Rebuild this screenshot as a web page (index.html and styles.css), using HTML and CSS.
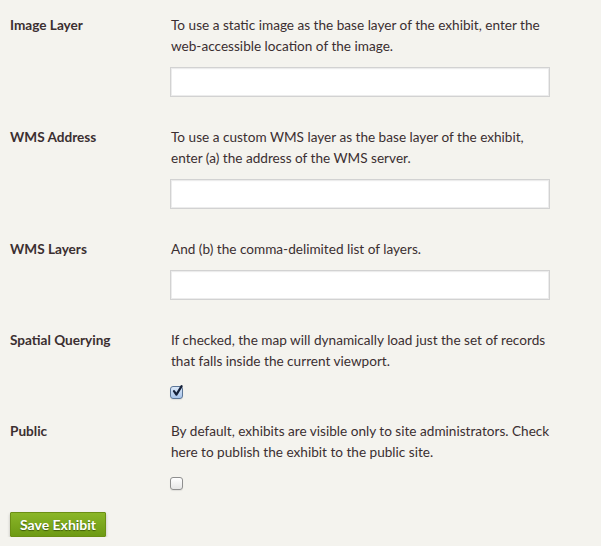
FILE: index.html
```html
<!DOCTYPE html>
<html>
<head>
<meta charset="utf-8">
<link rel="stylesheet" href="styles.css">
</head>
<body>
<form class="form">
  <div class="row">
    <div class="label">Image Layer</div>
    <div class="field">
      <p class="desc">To use a static image as the base layer of the exhibit, enter the web-accessible location of the image.</p>
      <input class="text" type="text">
    </div>
  </div>
  <div class="row">
    <div class="label">WMS Address</div>
    <div class="field">
      <p class="desc">To use a custom WMS layer as the base layer of the exhibit, enter (a) the address of the WMS server.</p>
      <input class="text" type="text">
    </div>
  </div>
  <div class="row">
    <div class="label">WMS Layers</div>
    <div class="field">
      <p class="desc">And (b) the comma-delimited list of layers.</p>
      <input class="text" type="text">
    </div>
  </div>
  <div class="row">
    <div class="label">Spatial Querying</div>
    <div class="field">
      <p class="desc">If checked, the map will dynamically load just the set of records that falls inside the current viewport.</p>
      <span class="check checked">
        <svg class="tick" width="13" height="13" viewBox="0 0 13 13"><path d="M3 6.2 L5.4 9.6 L10.6 1.2" fill="none" stroke="#15213a" stroke-width="2.2" stroke-linecap="round" stroke-linejoin="round"/></svg>
      </span>
    </div>
  </div>
  <div class="row">
    <div class="label">Public</div>
    <div class="field">
      <p class="desc">By default, exhibits are visible only to site administrators. Check here to publish the exhibit to the public site.</p>
      <span class="check"></span>
    </div>
  </div>
  <div class="actions">
    <button class="save" type="button">Save Exhibit</button>
  </div>
</form>
</body>
</html>
```

FILE: styles.css
```css
html, body {
  margin: 0;
  padding: 0;
}
body {
  background: #f4f3ee;
  color: #3b2f31;
  font-family: Lato, "Open Sans", sans-serif;
  font-size: 13.6px;
  line-height: 21px;
}
.form {
  display: flex;
  flex-direction: column;
  gap: 22px;
  padding: 15px 0 0 10px;
}
.row {
  display: grid;
  grid-template-columns: 160px 380px;
}
.label {
  font-weight: bold;
}
.desc {
  margin: 0;
  padding-left: 1px;
}
.text {
  display: block;
  box-sizing: border-box;
  width: 380px;
  height: 30px;
  margin: 10px 0 8px;
  border: 1px solid #d2d2d2;
  background: #fff;
  box-shadow: inset 0 0 0 1px #ececec, inset 0 1px 2px rgba(0,0,0,0.05);
}
.check {
  display: block;
  position: relative;
  box-sizing: border-box;
  width: 13px;
  height: 13px;
  margin-top: 14px;
  border: 1px solid #8f8f8f;
  border-radius: 3px;
  background: linear-gradient(#ffffff, #e6e6e6);
  box-shadow: 0 1px 1px rgba(0,0,0,0.08);
}
.check.checked {
  border-color: #5c7698;
  background: linear-gradient(#dbe8f8, #a8c4ea);
}
.tick {
  position: absolute;
  left: 0;
  top: -2px;
}
.actions {
  display: flex;
}
.save {
  font-family: Lato, "Open Sans", sans-serif;
  font-size: 14px;
  font-weight: bold;
  color: #fff;
  text-shadow: 0 1px 1px rgba(40,60,0,0.7);
  height: 25px;
  width: 96px;
  padding: 0;
  border: 1px solid #6b8f14;
  border-radius: 1px;
  background: linear-gradient(#8ab628, #6d9a14);
  box-shadow: 0 2px 3px rgba(0,0,0,0.25);
}
```
